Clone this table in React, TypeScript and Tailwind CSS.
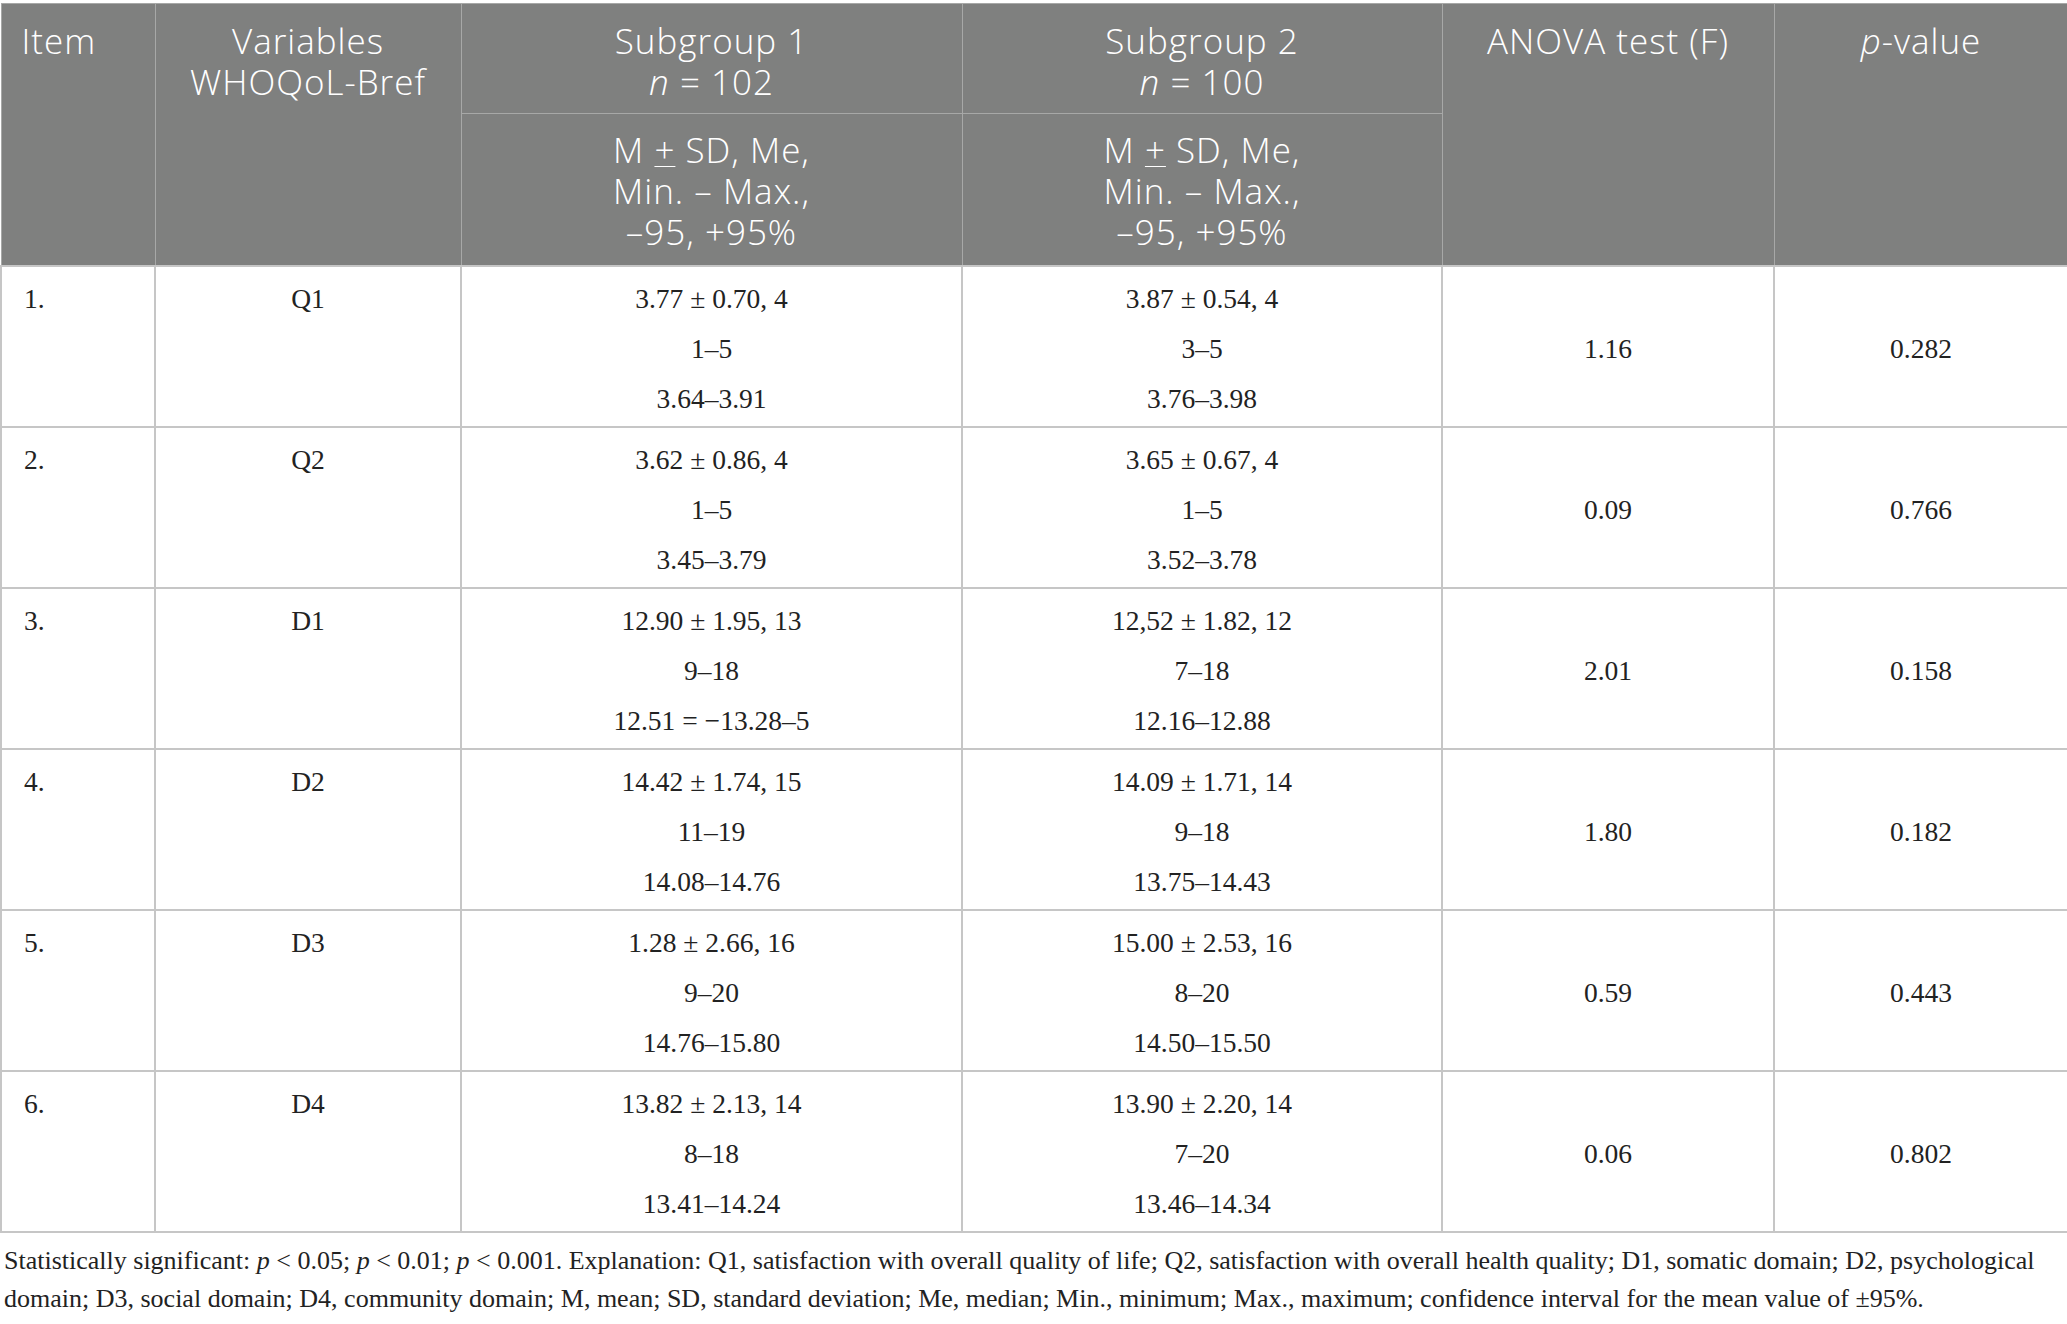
import React from 'react'

type Row = {
  item: string
  variable: string
  sub1: [string, string, string]
  sub2: [string, string, string]
  anova: string
  p: string
}

const rows: Row[] = [
  { item: '1.', variable: 'Q1', sub1: ['3.77 ± 0.70, 4', '1–5', '3.64–3.91'], sub2: ['3.87 ± 0.54, 4', '3–5', '3.76–3.98'], anova: '1.16', p: '0.282' },
  { item: '2.', variable: 'Q2', sub1: ['3.62 ± 0.86, 4', '1–5', '3.45–3.79'], sub2: ['3.65 ± 0.67, 4', '1–5', '3.52–3.78'], anova: '0.09', p: '0.766' },
  { item: '3.', variable: 'D1', sub1: ['12.90 ± 1.95, 13', '9–18', '12.51 = −13.28–5'], sub2: ['12,52 ± 1.82, 12', '7–18', '12.16–12.88'], anova: '2.01', p: '0.158' },
  { item: '4.', variable: 'D2', sub1: ['14.42 ± 1.74, 15', '11–19', '14.08–14.76'], sub2: ['14.09 ± 1.71, 14', '9–18', '13.75–14.43'], anova: '1.80', p: '0.182' },
  { item: '5.', variable: 'D3', sub1: ['1.28 ± 2.66, 16', '9–20', '14.76–15.80'], sub2: ['15.00 ± 2.53, 16', '8–20', '14.50–15.50'], anova: '0.59', p: '0.443' },
  { item: '6.', variable: 'D4', sub1: ['13.82 ± 2.13, 14', '8–18', '13.41–14.24'], sub2: ['13.90 ± 2.20, 14', '7–20', '13.46–14.34'], anova: '0.06', p: '0.802' },
]

const headFont = { fontFamily: '"Open Sans", "Noto Sans", sans-serif' }
const bodyFont = { fontFamily: '"Liberation Serif", "Times New Roman", serif' }

const Stats = () => (
  <>
    M <span className="underline decoration-1 underline-offset-[3px]">+</span> SD, Me,
    <br />
    Min. – Max.,
    <br />
    –95, +95%
  </>
)

const App = () => {
  const th = 'border border-[#a7a8a7] align-top font-light text-white text-[35px] tracking-[1px] leading-[41px]'
  const td = 'border-2 border-[#c6c6c6] text-[27.5px] leading-[50px] text-[#222] align-top pt-[7px] pb-[2px]'

  return (
    <div className="min-h-screen bg-white pt-[3px]">
      <table className="w-[2067px] table-fixed border-collapse border border-[#c6c6c6]">
        <colgroup>
          <col className="w-[154px]" />
          <col className="w-[306px]" />
          <col className="w-[501px]" />
          <col className="w-[480px]" />
          <col className="w-[332px]" />
          <col className="w-[294px]" />
        </colgroup>
        <thead className="bg-[#7f807f]" style={headFont}>
          <tr className="h-[110px]">
            <th rowSpan={2} className={`${th} pl-[20px] pt-[16px] text-left`}>
              Item
            </th>
            <th rowSpan={2} className={`${th} pt-[16px] text-center`}>
              Variables
              <br />
              WHOQoL-Bref
            </th>
            <th className={`${th} pt-[16px] pb-[9px] text-center`}>
              Subgroup 1
              <br />
              <i>n</i> = 102
            </th>
            <th className={`${th} pt-[16px] pb-[9px] text-center`}>
              Subgroup 2
              <br />
              <i>n</i> = 100
            </th>
            <th rowSpan={2} className={`${th} pt-[16px] text-center`}>
              ANOVA test (F)
            </th>
            <th rowSpan={2} className={`${th} pt-[16px] text-center`}>
              <i>p</i>-value
            </th>
          </tr>
          <tr className="h-[152px]">
            <th className={`${th} pt-[15px] pb-[11px] text-center`}>
              <Stats />
            </th>
            <th className={`${th} pt-[15px] pb-[11px] text-center`}>
              <Stats />
            </th>
          </tr>
        </thead>
        <tbody style={bodyFont}>
          {rows.map((r) => (
            <tr key={r.item} className="h-[159px]">
              <td className={`${td} pl-[22px] text-left`}>{r.item}</td>
              <td className={`${td} text-center`}>{r.variable}</td>
              <td className={`${td} text-center`}>
                {r.sub1.map((l) => (
                  <div key={l}>{l}</div>
                ))}
              </td>
              <td className={`${td} text-center`}>
                {r.sub2.map((l) => (
                  <div key={l}>{l}</div>
                ))}
              </td>
              <td className={`${td} text-center !align-middle`}>{r.anova}</td>
              <td className={`${td} text-center !align-middle`}>{r.p}</td>
            </tr>
          ))}
        </tbody>
      </table>
      <p className="mt-[9px] pl-[4px] text-[26px] leading-[38px] text-[#222]" style={bodyFont}>
        Statistically significant: <i>p</i> &lt; 0.05; <i>p</i> &lt; 0.01; <i>p</i> &lt; 0.001. Explanation: Q1, satisfaction with
        overall quality of life; Q2, satisfaction with overall health quality; D1, somatic domain; D2, psychological
        <br />
        domain; D3, social domain; D4, community domain; M, mean; SD, standard deviation; Me, median; Min., minimum;
        Max., maximum; confidence interval for the mean value of ±95%.
      </p>
    </div>
  )
}

export default App
